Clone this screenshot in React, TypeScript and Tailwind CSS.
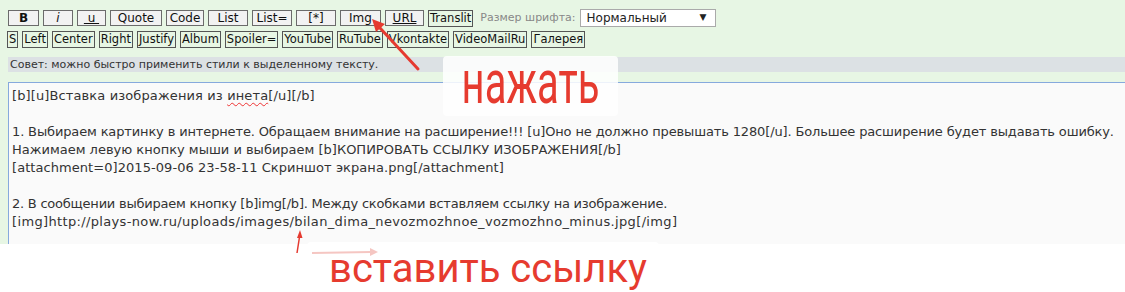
import React from 'react';

const topButtons: { label: React.ReactNode; w: string }[] = [
  { label: <b>B</b>, w: 'w-[31px]' },
  { label: <i>i</i>, w: 'w-[30px]' },
  { label: <span className="underline">&nbsp;u&nbsp;</span>, w: 'w-[29px]' },
  { label: 'Quote', w: 'w-[52px]' },
  { label: 'Code', w: 'w-[38px]' },
  { label: 'List', w: 'w-[40px]' },
  { label: 'List=', w: 'w-[40px]' },
  { label: '[*]', w: 'w-[40px]' },
  { label: 'Img', w: 'w-[41px]' },
  { label: <span className="underline">URL</span>, w: 'w-[39px]' },
];

const tagButtons = ['S', 'Left', 'Center', 'Right', 'Justify', 'Album', 'Spoiler=', 'YouTube', 'RuTube', 'Vkontakte', 'VideoMailRu', 'Галерея'];

// строки поля ввода; tracking подогнан под ширину строк в оригинале
const lines: { text: React.ReactNode; track: string }[] = [
  {
    text: (
      <>
        [b][u]Вставка изображения из{' '}
        <span className="underline decoration-wavy decoration-[#e33] decoration-1 underline-offset-2">инета</span>
        [/u][/b]
      </>
    ),
    track: 'tracking-[0.12px]',
  },
  { text: '\u00a0', track: '' },
  {
    text: '1. Выбираем картинку в интернете. Обращаем внимание на расширение!!! [u]Оно не должно превышать 1280[/u]. Большее расширение будет выдавать ошибку.',
    track: 'tracking-[-0.14px]',
  },
  { text: 'Нажимаем левую кнопку мыши и выбираем [b]КОПИРОВАТЬ ССЫЛКУ ИЗОБРАЖЕНИЯ[/b]', track: '' },
  { text: '[attachment=0]2015-09-06 23-58-11 Скриншот экрана.png[/attachment]', track: 'tracking-[0.06px]' },
  { text: '\u00a0', track: '' },
  { text: '2. В сообщении выбираем кнопку [b]img[/b]. Между скобками вставляем ссылку на изображение.', track: 'tracking-[-0.23px]' },
  { text: '[img]http://plays-now.ru/uploads/images/bilan_dima_nevozmozhnoe_vozmozhno_minus.jpg[/img]', track: 'tracking-[0.35px]' },
];

const TagButton = ({ children }: { children: React.ReactNode }) => (
  <button className="h-[17px] px-[1px] border border-[#555] bg-transparent text-[11.5px] leading-[15px] text-[#111]">
    {children}
  </button>
);

const Arrows = () => (
  <svg className="absolute inset-0 pointer-events-none" width="1125" height="292" viewBox="0 0 1125 292">
    <line x1="418" y1="69" x2="380" y2="28" stroke="#e53a30" strokeWidth="3" strokeLinecap="round" />
    <polygon points="372,19 385,24 376,32" fill="#e53a30" />
    <line x1="297" y1="253" x2="299.5" y2="237" stroke="#e53a30" strokeWidth="1.5" />
    <polygon points="300,230 302.5,238 297,238" fill="#e53a30" />
    <line x1="312" y1="253" x2="371" y2="252" stroke="#f5c6c2" strokeWidth="2" />
    <polygon points="378,252 370,248 370,256" fill="#f5c6c2" />
  </svg>
);

export default function App() {
  return (
    <div className="relative w-[1125px] h-[292px] overflow-hidden bg-white font-['DejaVu_Sans',sans-serif]">
      <div className="bg-[#e7f6e4] pl-[8px] pt-[9px]">
        <div className="flex items-center gap-[4px] h-[18px]">
          {topButtons.map((b, i) => (
            <button
              key={i}
              className={`${b.w} h-[16px] border border-[#6b6b6b] bg-[#f2f2f2] text-[12px] leading-[14px] text-[#111] text-center`}
            >
              {b.label}
            </button>
          ))}
          <TagButton>Translit</TagButton>
          <span className="ml-[3px] text-[11px] text-[#888]">Размер шрифта:</span>
          <div className="w-[136px] h-[18px] border border-[#aaa] bg-white flex items-center justify-between pl-[6px] pr-[8px] text-[12px] text-[#222]">
            <span>Нормальный</span>
            <span className="text-[9px]">▼</span>
          </div>
        </div>

        <div className="flex items-center gap-[4px] mt-[4px] -ml-[1px]">
          {tagButtons.map((t) => (
            <TagButton key={t}>{t}</TagButton>
          ))}
        </div>

        <div className="mt-[9px] h-[15px] bg-[#dce1e4] pl-[2px] text-[11px] leading-[15px] text-[#333]">
          Совет: можно быстро применить стили к выделенному тексту.
        </div>

        <div className="mt-[10px] h-[162px] w-[1200px] border-t border-l border-[#86a9dd] bg-[#fafafa] pt-[4px] pl-[3px] text-[13px] leading-[18px] text-[#333] whitespace-pre">
          {lines.map((l, i) => (
            <div key={i} className={l.track}>
              {l.text}
            </div>
          ))}
        </div>
      </div>

      <div className="-mt-[2px] ml-[307px] w-[352px] h-[50px] rounded-[4px] bg-white flex justify-center pt-[5px]">
        <span className="font-['Roboto',sans-serif] text-[40px] leading-[44px] text-[#e63b2f] translate-x-[5px]">вставить ссылку</span>
      </div>

      <div className="absolute left-[443px] top-[56px] w-[175px] h-[60px] rounded-[4px] bg-white/85 flex items-center justify-center">
        <span className="inline-block font-['Roboto',sans-serif] text-[40px] leading-[40px] text-[#e63b2f] scale-y-[1.52] -translate-y-[3px]">
          нажать
        </span>
      </div>

      <Arrows />
    </div>
  );
}
